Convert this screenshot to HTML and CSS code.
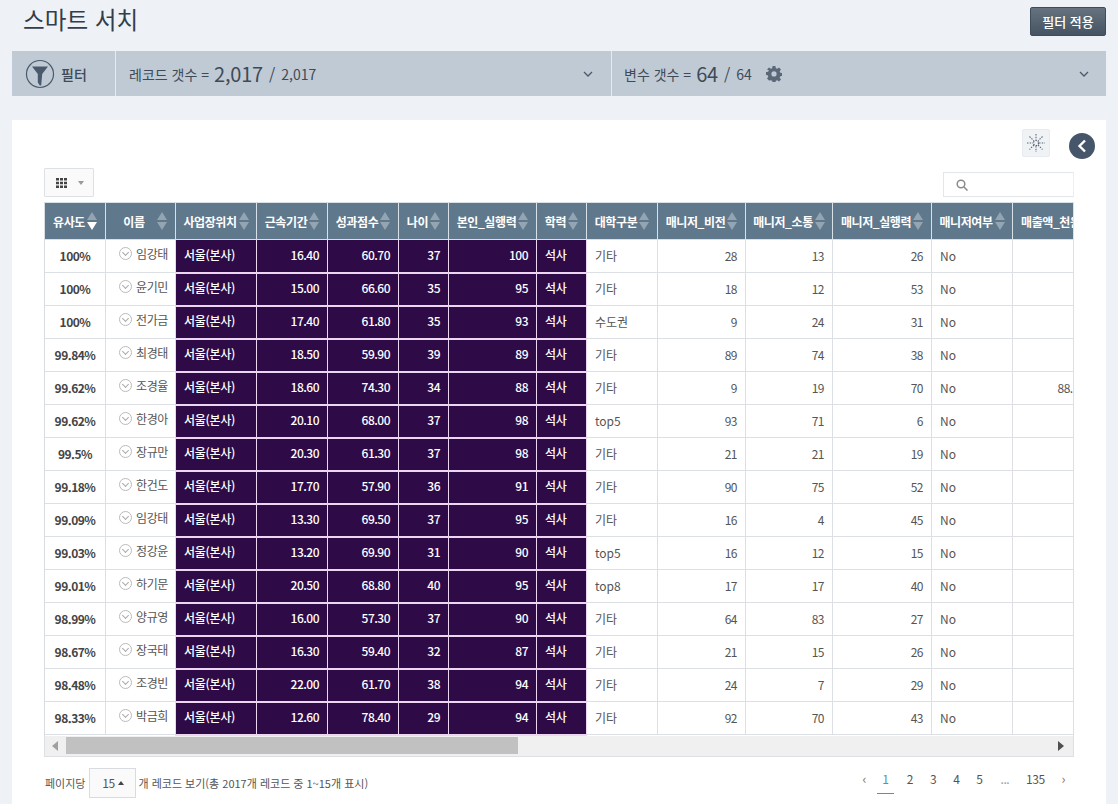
FILE: index.html
```html
<!DOCTYPE html>
<html lang="ko">
<head>
<meta charset="utf-8">
<title>스마트 서치</title>
<link rel="stylesheet" href="styles.css">
</head>
<body>
<header class="top">
  <h1>스마트 서치</h1>
  <button class="apply">필터 적용</button>
</header>
<section class="filterbar">
  <div class="f-label">
    <svg class="funnel" width="30" height="30" viewBox="0 0 30 30"><circle cx="15" cy="15" r="13.5" fill="none" stroke="#4a5a6c" stroke-width="1.2"/><path d="M7 7.500h16l-5.800 7.500-1 11.500h-1.400l-2-3V15z" fill="#4a5a6c"/></svg>
    <span>필터</span>
  </div>
  <div class="f-rec">
    <span class="f-name">레코드 갯수 =</span><span class="big">2,017</span><span class="sl">/</span><span class="sm">2,017</span>
    <svg class="chev" width="10" height="6" viewBox="0 0 10 6"><path d="M1 1l4 4 4-4" fill="none" stroke="#4a5a6c" stroke-width="1.3"/></svg>
  </div>
  <div class="f-var">
    <span class="f-name">변수 갯수 =</span><span class="big">64</span><span class="sl">/</span><span class="sm">64</span>
    <svg class="gear" width="16" height="16" viewBox="0 0 16 16"><path fill="#5a6878" fill-rule="evenodd" d="M6.600 0h2.800l.4 2.200 1.400.6L13 1.500l2 2-1.300 1.800.6 1.400 2.200.4v2.800l-2.200.4-.6 1.400 1.300 1.800-2 2-1.800-1.300-1.400.6-.4 2.200H6.600l-.4-2.200-1.400-.6L3 14.500l-2-2 1.300-1.800-.6-1.400L0 8.900V6.100l2.200-.4.6-1.400L1 3.500l2-2 1.800 1.300 1.400-.6zM8 5.300a2.600 2.600 0 1 0 0 5.200 2.600 2.600 0 0 0 0-5.200z"/></svg>
    <svg class="chev" width="10" height="6" viewBox="0 0 10 6"><path d="M1 1l4 4 4-4" fill="none" stroke="#4a5a6c" stroke-width="1.300"/></svg>
  </div>
</section>
<main class="panel">
  <div class="tools-top">
    <div class="net"><svg width="20" height="20" viewBox="0 0 20 20" fill="none" stroke="#5c6672" stroke-width="1.100" stroke-dasharray="1.500 1.200"><circle cx="10" cy="10" r="2.500"/><path d="M10 1v6M10 13v6M1 10h6M13 10h6M3.500 3.500l4.500 4.500M12 12l4.500 4.500M16.500 3.500L12 8M8 12l-4.500 4.500"/></svg></div>
    <div class="back"><svg width="12" height="14" viewBox="0 0 12 14"><path d="M9 1.500L3.500 7 9 12.500" fill="none" stroke="#fff" stroke-width="2.400"/></svg></div>
  </div>
  <div class="tools">
    <button class="colbtn"><svg width="11" height="10" viewBox="0 0 11 10" fill="#444"><path d="M0 0h3v2.500H0zM4 0h3v2.500H4zM8 0h3v2.500H8zM0 3.700h3v2.500H0zM4 3.700h3v2.500H4zM8 3.700h3v2.500H8zM0 7.400h3V10H0zM4 7.400h3V10H4zM8 7.400h3V10H8z"/></svg><i class="caret"></i></button>
    <div class="search"><svg width="12" height="12" viewBox="0 0 12 12" fill="none" stroke="#8a8a8a" stroke-width="1.500"><circle cx="5" cy="5" r="3.800"/><path d="M8 8l3.500 3.500"/></svg></div>
  </div>
  <div class="tablewrap">
    <table>
      <colgroup><col class="c61"><col class="c70"><col class="c81"><col class="c71"><col class="c71"><col class="c50"><col class="c88"><col class="c50"><col class="c71"><col class="c88"><col class="c87"><col class="c99"><col class="c81"><col class="c81"></colgroup>
      <thead><tr>
        <th><span class="th">유사도<i class="sort on"></i></span></th>
        <th><span class="th th-name">이름<i class="sort"></i></span></th>
        <th><span class="th">사업장위치<i class="sort"></i></span></th>
        <th><span class="th">근속기간<i class="sort"></i></span></th>
        <th><span class="th">성과점수<i class="sort"></i></span></th>
        <th><span class="th">나이<i class="sort"></i></span></th>
        <th><span class="th">본인_실행력<i class="sort"></i></span></th>
        <th><span class="th">학력<i class="sort"></i></span></th>
        <th><span class="th">대학구분<i class="sort"></i></span></th>
        <th><span class="th">매니저_비전<i class="sort"></i></span></th>
        <th><span class="th">매니저_소통<i class="sort"></i></span></th>
        <th><span class="th">매니저_실행력<i class="sort"></i></span></th>
        <th><span class="th">매니저여부<i class="sort"></i></span></th>
        <th class="th-left"><span class="th">매출액_천원</span></th>
      </tr></thead>
      <tbody>
        <tr><td class="sim">100%</td><td class="nm"><i class="circ"></i>임강태</td><td class="hl">서울(본사)</td><td class="hl r">16.40</td><td class="hl r">60.70</td><td class="hl r">37</td><td class="hl r">100</td><td class="hl">석사</td><td>기타</td><td class="r">28</td><td class="r">13</td><td class="r">26</td><td>No</td><td class="r"></td></tr>
        <tr><td class="sim">100%</td><td class="nm"><i class="circ"></i>윤기민</td><td class="hl">서울(본사)</td><td class="hl r">15.00</td><td class="hl r">66.60</td><td class="hl r">35</td><td class="hl r">95</td><td class="hl">석사</td><td>기타</td><td class="r">18</td><td class="r">12</td><td class="r">53</td><td>No</td><td class="r"></td></tr>
        <tr><td class="sim">100%</td><td class="nm"><i class="circ"></i>전가금</td><td class="hl">서울(본사)</td><td class="hl r">17.40</td><td class="hl r">61.80</td><td class="hl r">35</td><td class="hl r">93</td><td class="hl">석사</td><td>수도권</td><td class="r">9</td><td class="r">24</td><td class="r">31</td><td>No</td><td class="r"></td></tr>
        <tr><td class="sim">99.84%</td><td class="nm"><i class="circ"></i>최경태</td><td class="hl">서울(본사)</td><td class="hl r">18.50</td><td class="hl r">59.90</td><td class="hl r">39</td><td class="hl r">89</td><td class="hl">석사</td><td>기타</td><td class="r">89</td><td class="r">74</td><td class="r">38</td><td>No</td><td class="r"></td></tr>
        <tr><td class="sim">99.62%</td><td class="nm"><i class="circ"></i>조경율</td><td class="hl">서울(본사)</td><td class="hl r">18.60</td><td class="hl r">74.30</td><td class="hl r">34</td><td class="hl r">88</td><td class="hl">석사</td><td>기타</td><td class="r">9</td><td class="r">19</td><td class="r">70</td><td>No</td><td class="r">88.50</td></tr>
        <tr><td class="sim">99.62%</td><td class="nm"><i class="circ"></i>한경아</td><td class="hl">서울(본사)</td><td class="hl r">20.10</td><td class="hl r">68.00</td><td class="hl r">37</td><td class="hl r">98</td><td class="hl">석사</td><td>top5</td><td class="r">93</td><td class="r">71</td><td class="r">6</td><td>No</td><td class="r"></td></tr>
        <tr><td class="sim">99.5%</td><td class="nm"><i class="circ"></i>장규만</td><td class="hl">서울(본사)</td><td class="hl r">20.30</td><td class="hl r">61.30</td><td class="hl r">37</td><td class="hl r">98</td><td class="hl">석사</td><td>기타</td><td class="r">21</td><td class="r">21</td><td class="r">19</td><td>No</td><td class="r"></td></tr>
        <tr><td class="sim">99.18%</td><td class="nm"><i class="circ"></i>한건도</td><td class="hl">서울(본사)</td><td class="hl r">17.70</td><td class="hl r">57.90</td><td class="hl r">36</td><td class="hl r">91</td><td class="hl">석사</td><td>기타</td><td class="r">90</td><td class="r">75</td><td class="r">52</td><td>No</td><td class="r"></td></tr>
        <tr><td class="sim">99.09%</td><td class="nm"><i class="circ"></i>임강태</td><td class="hl">서울(본사)</td><td class="hl r">13.30</td><td class="hl r">69.50</td><td class="hl r">37</td><td class="hl r">95</td><td class="hl">석사</td><td>기타</td><td class="r">16</td><td class="r">4</td><td class="r">45</td><td>No</td><td class="r"></td></tr>
        <tr><td class="sim">99.03%</td><td class="nm"><i class="circ"></i>정강윤</td><td class="hl">서울(본사)</td><td class="hl r">13.20</td><td class="hl r">69.90</td><td class="hl r">31</td><td class="hl r">90</td><td class="hl">석사</td><td>top5</td><td class="r">16</td><td class="r">12</td><td class="r">15</td><td>No</td><td class="r"></td></tr>
        <tr><td class="sim">99.01%</td><td class="nm"><i class="circ"></i>하기문</td><td class="hl">서울(본사)</td><td class="hl r">20.50</td><td class="hl r">68.80</td><td class="hl r">40</td><td class="hl r">95</td><td class="hl">석사</td><td>top8</td><td class="r">17</td><td class="r">17</td><td class="r">40</td><td>No</td><td class="r"></td></tr>
        <tr><td class="sim">98.99%</td><td class="nm"><i class="circ"></i>양규영</td><td class="hl">서울(본사)</td><td class="hl r">16.00</td><td class="hl r">57.30</td><td class="hl r">37</td><td class="hl r">90</td><td class="hl">석사</td><td>기타</td><td class="r">64</td><td class="r">83</td><td class="r">27</td><td>No</td><td class="r"></td></tr>
        <tr><td class="sim">98.67%</td><td class="nm"><i class="circ"></i>장국태</td><td class="hl">서울(본사)</td><td class="hl r">16.30</td><td class="hl r">59.40</td><td class="hl r">32</td><td class="hl r">87</td><td class="hl">석사</td><td>기타</td><td class="r">21</td><td class="r">15</td><td class="r">26</td><td>No</td><td class="r"></td></tr>
        <tr><td class="sim">98.48%</td><td class="nm"><i class="circ"></i>조경빈</td><td class="hl">서울(본사)</td><td class="hl r">22.00</td><td class="hl r">61.70</td><td class="hl r">38</td><td class="hl r">94</td><td class="hl">석사</td><td>기타</td><td class="r">24</td><td class="r">7</td><td class="r">29</td><td>No</td><td class="r"></td></tr>
        <tr><td class="sim">98.33%</td><td class="nm"><i class="circ"></i>박금희</td><td class="hl">서울(본사)</td><td class="hl r">12.60</td><td class="hl r">78.40</td><td class="hl r">29</td><td class="hl r">94</td><td class="hl">석사</td><td>기타</td><td class="r">92</td><td class="r">70</td><td class="r">43</td><td>No</td><td class="r"></td></tr>
      </tbody>
    </table>
  </div>
  <div class="hscroll">
    <i class="arr-l"></i>
    <div class="track"><div class="thumb"></div></div>
    <i class="arr-r"></i>
  </div>
  <footer class="foot">
    <div class="pg-info">
      <span>페이지당</span>
      <span class="size">15<i class="caret-up"></i></span>
      <span>개 레코드 보기(총 2017개 레코드 중 1~15개 표시)</span>
    </div>
    <nav class="pager">
      <a class="edge">‹</a><a class="cur">1</a><a>2</a><a>3</a><a>4</a><a>5</a><a class="dots">...</a><a>135</a><a class="edge">›</a>
    </nav>
  </footer>
</main>
</body>
</html>
```
FILE: styles.css
```css
* { box-sizing: border-box; }
html, body { margin: 0; padding: 0; }
body {
  width: 1118px; height: 804px; overflow: hidden;
  background: #eef2f6; color: #444;
  font-family: "Noto Sans CJK KR", "Noto Sans", sans-serif;
  font-size: 12px;
}
.top { display: flex; justify-content: space-between; height: 51px; padding: 0 12px 0 23px; }
h1 { margin: 2px 0 0; font-size: 23.6px; line-height: 34px; font-weight: 400; color: #333d4b; }
.apply {
  margin-top: 7px; width: 76px; height: 29px; padding: 0;
  border: 1px solid #3f4c5a; border-radius: 2px;
  background: linear-gradient(#65727f, #465362);
  color: #fff; font: 500 13px "Noto Sans CJK KR", sans-serif;
}
.filterbar { display: flex; height: 45px; margin: 0 12px; background: #c0cad5; color: #3e4a58; }
.filterbar > div { display: flex; align-items: center; }
.f-label { width: 104px; gap: 6px; padding-left: 13px; border-right: 1px solid #e6ebf0; font-size: 14px; font-weight: 500; }
.f-rec { width: 496px; padding-left: 13px; border-right: 1px solid #e6ebf0; }
.f-var { flex: 1; padding-left: 12px; }
.f-name { font-size: 14px; margin-right: 5px; }
.big { font-size: 20px; letter-spacing: -0.2px; }
.sl { font-size: 16px; margin: 0 6px; }
.sm { font-size: 14px; }
.gear { margin-left: 14px; }
.chev { margin-left: auto; margin-right: 18px; }
.f-var .chev { margin-right: 17px; }
.panel { margin: 24px 12px 0; height: 684px; background: #fff; padding: 0 32px; position: relative; }
.tools-top { height: 48px; position: relative; }
.net {
  position: absolute; right: 24px; top: 9px; width: 28px; height: 28px;
  display: flex; align-items: center; justify-content: center;
  background: #f0f3f6; border: 1px solid #e8ebef; border-radius: 2px;
}
.back {
  position: absolute; right: -21px; top: 13px; width: 26px; height: 26px; border-radius: 50%;
  background: #45556a; display: flex; align-items: center; justify-content: center;
}
.tools { display: flex; justify-content: space-between; height: 34px; }
.colbtn {
  width: 50px; height: 29px; padding: 0 0 0 11px; display: flex; align-items: center; gap: 11px;
  background: #fafafa; border: 1px solid #dde0e4; border-radius: 1px;
}
.caret { width: 0; height: 0; border: 3.5px solid transparent; border-top: 4px solid #999; border-bottom: 0; }
.search {
  width: 131px; height: 25px; margin-top: 4px; padding-left: 12px; display: flex; align-items: center;
  border: 1px solid #e4e7ea; border-right-color: #eee;
}
.tablewrap { width: 1030px; overflow: hidden; border-left: 1px solid #d8dce0; border-right: 1px solid #dcdfe3; }
table { border-collapse: collapse; table-layout: fixed; width: 1049px; margin-left: -1px; }
.c61 { width: 61px; } .c70 { width: 70px; } .c81 { width: 81px; } .c71 { width: 71px; }
.c50 { width: 50px; } .c88 { width: 88px; } .c87 { width: 87px; } .c99 { width: 99px; }
th {
  height: 37px; padding: 0; background: #5f788c; color: #fff;
  border: 1px solid #d8e0e8; font-size: 12px; font-weight: 700; white-space: nowrap; overflow: hidden;
  letter-spacing: -0.4px;
}
.th { display: flex; align-items: center; justify-content: center; gap: 2px; }
.th-name { gap: 12px; padding-left: 9px; }
.th-left .th { justify-content: flex-start; padding-left: 8px; }
.sort { display: inline-block; position: relative; width: 10px; height: 20px; flex: none; }
.sort::before, .sort::after {
  content: ""; position: absolute; left: 0; width: 0; height: 0;
  border-left: 5px solid transparent; border-right: 5px solid transparent;
}
.sort::before { top: 1px; border-bottom: 8px solid #93a4b2; }
.sort::after { bottom: 1px; border-top: 8px solid #93a4b2; }
.sort.on::after { border-top-color: #fff; }
td {
  height: 33px; padding: 0 8px 2px; border: 1px solid #dcdfe3; font-size: 12px;
  color: #555; white-space: nowrap; overflow: hidden; background: #fff;
}
td.r { text-align: right; letter-spacing: -0.5px; }
td.sim { text-align: center; font-weight: 700; color: #444; letter-spacing: -0.5px; }
td.nm { padding: 0 0 5px 13px; color: #555; letter-spacing: -0.4px; }
.circ {
  display: inline-block; width: 13px; height: 13px; margin-right: 4px; vertical-align: -1px;
  border: 1px solid #bbb; border-radius: 50%; position: relative;
}
.circ::after {
  content: ""; position: absolute; left: 3px; top: 2px; width: 4px; height: 4px;
  border-right: 1px solid #aaa; border-bottom: 1px solid #aaa; transform: rotate(45deg);
}
td.hl {
  background: #2e0b47; color: #fff; font-weight: 500; border-color: #ecd6f2;
  border-width: 1px 1px 2px 1px; padding-bottom: 3px; letter-spacing: -0.3px;
}
td.hl.r { letter-spacing: -0.5px; }
.hscroll { width: 1030px; height: 21px; background: #f0f0f0; border: 1px solid #dcdfe3; border-top: 0; display: flex; align-items: center; padding: 0 9px 0 7px; }
.track { flex: 1; height: 17px; margin: 0 0 0 8px; }
.thumb { width: 452px; height: 17px; background: #c1c1c1; }
.arr-l { width: 0; height: 0; border: 5px solid transparent; border-right: 6px solid #a0a0a0; border-left: 0; }
.arr-r { width: 0; height: 0; border: 5px solid transparent; border-left: 6px solid #505050; border-right: 0; }
.foot { display: flex; justify-content: space-between; align-items: flex-start; margin-top: 11px; }
.pg-info { display: flex; align-items: center; gap: 3px; color: #555; font-size: 11px; padding-left: 1px; }
.size {
  width: 47px; height: 30px; margin: 0 -1px 0 1px; display: flex; align-items: center; justify-content: center; gap: 3px;
  background: #fafafa; border: 1px solid #d8dce0; font-size: 12px; letter-spacing: -0.5px;
}
.caret-up { width: 0; height: 0; border: 3px solid transparent; border-bottom: 4px solid #444; border-top: 0; }
.pager { display: flex; font-size: 12px; color: #555; margin-right: 9px; align-items: flex-start; letter-spacing: -0.5px; }
.pager a { height: 26px; padding: 0 6px; margin-left: 5px; line-height: 22px; }
.pager .cur { color: #4a97b5; border-bottom: 1px solid #4a97b5; width: 17px; padding: 0; margin-left: 11px; margin-right: 2px; text-align: center; }
.pager .edge { color: #777; font-size: 13px; padding: 0; margin: 0 0 0 11px; }
.pager .dots { color: #999; margin-left: 6px; }
```
